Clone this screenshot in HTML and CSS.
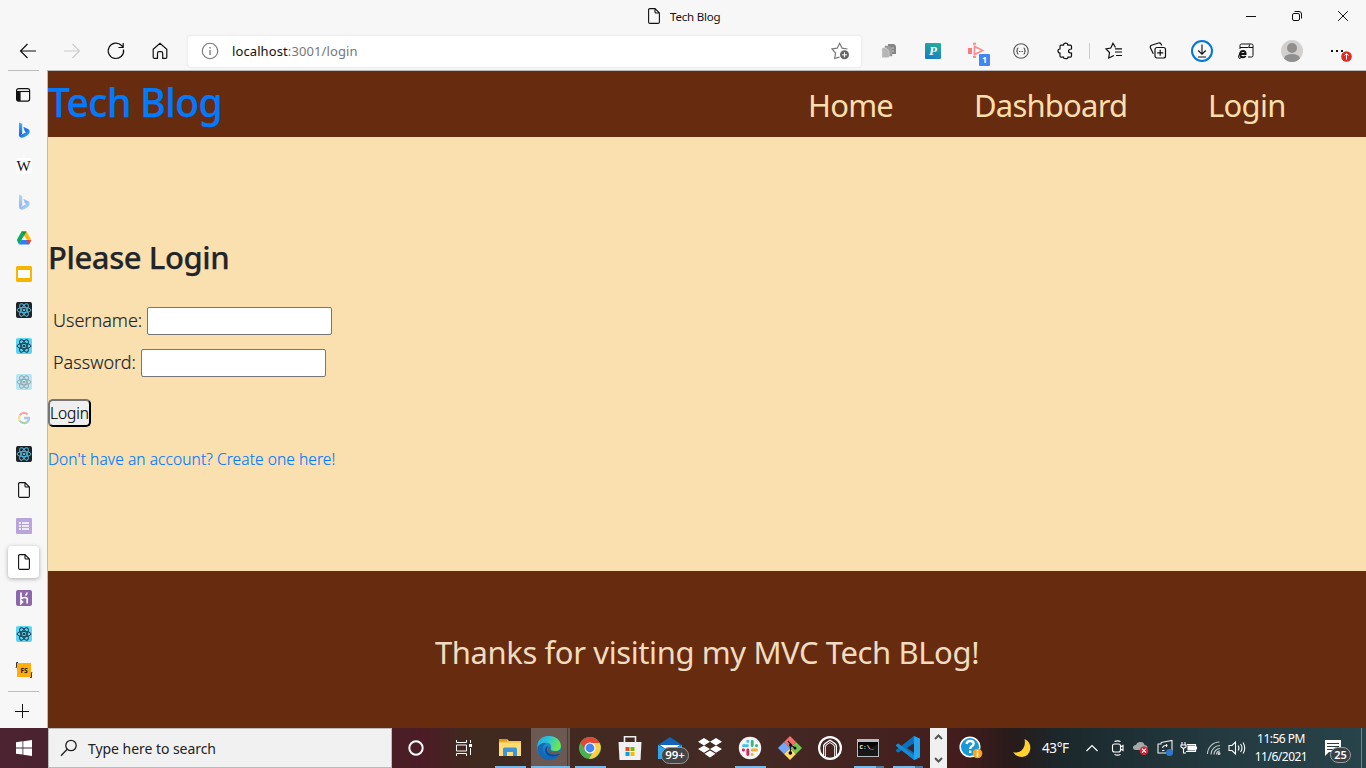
FILE: index.html
```html
<!DOCTYPE html>
<html lang="en">
<head>
<meta charset="utf-8">
<title>Tech Blog</title>
<link rel="stylesheet" href="styles.css">
</head>
<body>
<svg class="defs" width="0" height="0">
  <defs>
    <symbol id="doc" viewBox="0 0 16 16"><path d="M4 .6h5L13.400 5v9q0 1.400-1.400 1.400H4Q2.600 15.400 2.600 14V2Q2.600.6 4 .6zM9 .6V4q0 1 1 1h3.400" fill="none" stroke="#111" stroke-width="1.100"/></symbol>
    <symbol id="atom" viewBox="0 0 16 16"><g fill="none" stroke="currentColor" stroke-width="1"><ellipse cx="8" cy="8" rx="6.900" ry="2.700"/><ellipse cx="8" cy="8" rx="6.900" ry="2.700" transform="rotate(60 8 8)"/><ellipse cx="8" cy="8" rx="6.900" ry="2.700" transform="rotate(120 8 8)"/></g><circle cx="8" cy="8" r="1.300" fill="currentColor"/></symbol>
    <linearGradient id="bg1" x1="0" y1="0" x2="1" y2="1"><stop offset="0" stop-color="#38b6f8"/><stop offset=".5" stop-color="#1d6ee8"/><stop offset="1" stop-color="#30d5f5"/></linearGradient>
    <linearGradient id="bg2" x1="0" y1="0" x2="0" y2="1"><stop offset="0" stop-color="#3bbcf8"/><stop offset="1" stop-color="#2452dc"/></linearGradient>
    <symbol id="bing" viewBox="0 0 16 16"><path d="M3 .5l2.500 1q.7.300.7 1V12L3 14z" fill="url(#bg2)"/><path d="M7.500 5.500q-.5-.8.500-.5l4 2q2 1 1.700 3.200Q13.300 12.500 11 13.800l-3 1.500q-2.500 1-4-.2Q2.500 14 3 12.500q.7 1 2.500.2L10 10.200 8.500 8.800z" fill="url(#bg1)"/></symbol>
    <linearGradient id="eg1" x1="0" y1="0" x2="1" y2=".3"><stop offset="0" stop-color="#1fa8e0"/><stop offset=".5" stop-color="#2cc3d4"/><stop offset="1" stop-color="#6be850"/></linearGradient>
    <linearGradient id="eg2" x1="0" y1="0" x2="0" y2="1"><stop offset="0" stop-color="#2aa0e0"/><stop offset="1" stop-color="#0d62b8"/></linearGradient>
  </defs>
</svg>

<div class="titlebar">
  <div class="title"><svg width="16" height="16"><use href="#doc"/></svg><span>Tech Blog</span></div>
  <div class="window-buttons">
    <svg width="12" height="12"><path d="M1 6.500h10" stroke="#111"/></svg>
    <svg width="12" height="12" fill="none" stroke="#111"><rect x="1.500" y="3.500" width="7" height="7" rx="1.500"/><path d="M3.500 1.500H8q2.500 0 2.500 2.500v4.500"/></svg>
    <svg width="12" height="12"><path d="M1.200 1.200l9.600 9.600M10.800 1.200l-9.600 9.600" stroke="#111"/></svg>
  </div>
</div>

<div class="toolbar">
  <span class="tool"><svg width="18" height="18" fill="none" stroke="#111" stroke-width="1.200"><path d="M17 9H1.500M8.500 2l-7 7 7 7"/></svg></span>
  <span class="tool"><svg width="18" height="18" fill="none" stroke="#ccc" stroke-width="1.200"><path d="M1 9h15.500M9.500 2l7 7-7 7"/></svg></span>
  <span class="tool"><svg width="18" height="18" fill="none" stroke="#111" stroke-width="1.200"><path d="M16.500 7.500A7.700 7.700 0 1 1 14.500 3.500L16 5M16.200 1v4.500h-4.700"/></svg></span>
  <span class="tool"><svg width="18" height="18" fill="none" stroke="#111" stroke-width="1.200"><path d="M2.200 7.200L9 1.300l6.800 5.900v8q0 1.200-1.200 1.200h-2.900v-5q0-1.700-1.500-1.700H8q-1.500 0-1.500 1.700v5H3.400q-1.200 0-1.200-1.200z"/></svg></span>
  <div class="address">
    <svg width="18" height="18"><circle cx="9" cy="9" r="7.700" fill="none" stroke="#777" stroke-width="1.100"/><path d="M9 8v5M9 5v1.500" stroke="#777" stroke-width="1.300"/></svg>
    <span class="url">localhost<span class="path">:3001/login</span></span>
    <svg class="fav" width="20" height="18"><path d="M8.500 15.200l-4.800 1.300L4.600 11 1 7l5.200-.8L8.600 1.300l2.500 4.900 5.400.8" fill="none" stroke="#777" stroke-width="1.200"/><circle cx="13.500" cy="12.800" r="4.500" fill="#666"/><path d="M11 12.800h5M13.500 10.300v5" stroke="#fff"/></svg>
  </div>
  <span class="tool"><svg width="18" height="18"><path d="M8 2h6l2 2v8H8z" fill="#858585"/><path d="M5 4h5l2 2v8H5z" fill="#a0a0a0" stroke="#888" stroke-width=".5"/><path d="M2 6h4l3 3v6.500H2z" fill="#b5b5b5" stroke="#ddd" stroke-width=".5"/><path d="M12 6h2M12 9h2" stroke="#ccc"/></svg></span>
  <span class="tool"><span class="p-tile">P</span></span>
  <span class="tool badge-host"><svg width="20" height="18"><path d="M1 6h4v6H1z" fill="#f87d80"/><path d="M7.500 4.500v8l8-4z" fill="#fff" stroke="#f98d8f" stroke-width="1.700"/><path d="M6 1.800h3M6 15h3" fill="none" stroke="#f98d8f" stroke-width="2"/></svg><b class="one">1</b></span>
  <span class="tool"><svg width="18" height="18" fill="none" stroke="#555" stroke-width="1.100"><circle cx="9" cy="9" r="7.300"/><path d="M6.500 6q-1.300 0-1.200 1.500Q5.400 9 4.200 9q1.200 0 1.100 1.500Q5.200 12 6.500 12M11.500 6q1.300 0 1.200 1.500-.1 1.500 1.100 1.500-1.200 0-1.100 1.500.1 1.500-1.200 1.500"/><path d="M7 9.500h4" stroke-dasharray="1 .5"/></svg></span>
  <span class="tool"><svg width="18" height="18" fill="none" stroke="#111" stroke-width="1.200"><path d="M5 3.200h2.500q0-2 2.200-2t2.200 2h2.400q1.200 0 1.200 1.200V7q-3 0-3 2t3 2v3q0 1.200-1.200 1.200H12q0 1.500-2.300 1.500t-2.200-1.500H5q-1 0-1-1.200V11Q2 11 2 9t2-2V4.400q0-1.200 1-1.200z"/></svg></span>
  <i class="tool-divider"></i>
  <span class="tool"><svg width="18" height="18" fill="none" stroke="#111" stroke-width="1.200"><path d="M10.500 5.500L8 1.200 5.800 6 1 6.800l3.500 3.700-.8 5.500L9 13.500M10 6.800h7M10 10h7M11 13.500h6"/></svg></span>
  <span class="tool"><svg width="18" height="18" fill="none" stroke="#111" stroke-width="1.200"><rect x="6" y="5.500" width="10.500" height="10.500" rx="2"/><path d="M4.300 11.800L1.500 6q-.8-2 1-2.800L9.500 1q1.700-.5 2.500 1l.8 1.500M11.200 7.800v6M8.200 10.800h6"/></svg></span>
  <span class="tool"><svg width="24" height="24" fill="none"><circle cx="12" cy="12" r="10" stroke="#0078d7" stroke-width="2"/><path d="M12 5.500v9.500M8.200 11.500l3.800 3.700 3.800-3.700M8 18h8" stroke="#111" stroke-width="1.100"/></svg></span>
  <span class="tool"><svg width="18" height="18" fill="none" stroke="#111"><path d="M3 7V3.500Q3 2 4.500 2h10Q16 2 16 3.500v10q0 1.500-1.500 1.500H11M3 5.500h8q1.500 0 1.500-3M12 5.500h4"/><path d="M3.700 12h4.900q0-3-2.500-3-3 0-3 3.300 0 3 2.900 3 1.700 0 2.600-1.300" stroke-width="1.900"/><path d="M4 9.500q-3.500 5-2 6.700 1 .7 2.500-1"/></svg></span>
  <span class="tool wide"><svg width="24" height="24"><circle cx="12" cy="12" r="11" fill="#d2d0ce"/><circle cx="12" cy="9" r="5" fill="#8f8f8f"/><path d="M4 19.500q1-4.500 8-4.500t8 4.500q-3.500 3.500-8 3.500t-8-3.500z" fill="#8f8f8f"/></svg></span>
  <span class="tool wide"><svg width="32" height="24"><path d="M7 12h2M12 12h2M17 12h2" stroke="#111" stroke-width="2"/><circle cx="22.500" cy="17.500" r="5.300" fill="#d92c24"/><path d="M22.500 20.500v-6M20.500 16.500l2-2 2 2" stroke="#fff" fill="none"/></svg></span>
</div>

<div class="workspace">
  <aside class="tabs">
    <i class="line"></i>
    <div class="tab-list">
      <span class="tab"><svg width="16" height="16"><rect x=".6" y="2.600" width="13" height="12.500" rx="2" fill="none" stroke="#111" stroke-width="1.200"/><path d="M.6 5h4v10H2Q.6 15 .6 13.500z" fill="#111"/><path d="M1 5.500h13" stroke="#111" stroke-width="1.100"/></svg></span>
      <span class="tab"><svg width="16" height="16"><use href="#bing"/></svg></span>
      <span class="tab"><span class="wiki">W</span></span>
      <span class="tab faded"><svg width="16" height="16"><use href="#bing"/></svg></span>
      <span class="tab"><svg width="16" height="16"><path d="M5.500 1.500h5L5.200 11 3 14.500.8 10z" fill="#0da960"/><path d="M5.500 1.500h5l4.700 8.300h-4.800L8 5.500z" fill="#ffba00"/><path d="M5.500 1.500h5L8 5.800z" fill="#0a9150"/><path d="M5.500 10h9.700L13 14.500H3z" fill="#2d7df6"/><path d="M10.500 10h4.800L13 14.500z" fill="#ea4335"/><path d="M8 6l2.500 4h-5z" fill="#f7f7f7"/></svg></span>
      <span class="tab"><svg width="16" height="16"><rect width="16" height="16" rx="1.500" fill="#f7b500"/><rect x="2" y="4" width="12" height="8" fill="#fff"/></svg></span>
      <span class="tab"><svg class="react dark" width="16" height="16"><use href="#atom"/></svg></span>
      <span class="tab"><svg class="react" width="16" height="16"><use href="#atom"/></svg></span>
      <span class="tab faded"><svg class="react" width="16" height="16"><use href="#atom"/></svg></span>
      <span class="tab faded"><svg width="16" height="16" fill="none" stroke-width="2.300"><circle cx="8" cy="8" r="8" fill="#fff"/><path d="M11.700 4.500A5 5 0 0 0 3.700 5.500" stroke="#ea4335"/><path d="M3.700 5.500a5 5 0 0 0 0 5" stroke="#fbbc05"/><path d="M3.700 10.500a5 5 0 0 0 7.500 1.500" stroke="#34a853"/><path d="M11.200 12Q13 10.500 13 8H8" stroke="#4285f4"/></svg></span>
      <span class="tab"><svg class="react dark" width="16" height="16"><use href="#atom"/></svg></span>
      <span class="tab"><svg width="16" height="16"><use href="#doc"/></svg></span>
      <span class="tab"><svg width="16" height="16"><rect width="16" height="16" rx="1" fill="#b9a5dc"/><path d="M3 5h2M3 8h2M3 11h2M6 5h7M6 8h7M6 11h7" stroke="#fff" stroke-width="1.700"/></svg></span>
      <span class="tab active"><svg width="16" height="16"><use href="#doc"/></svg></span>
      <span class="tab"><svg width="16" height="16"><rect width="16" height="16" rx="2" fill="#8d67ac"/><path d="M5 2.500v6q5-2 6.200 0v5M11 2.500q0 1.500-1.500 3M5 10.500v3l1.500-1.500z" fill="none" stroke="#fff" stroke-width="1.700"/></svg></span>
      <span class="tab"><svg class="react" width="16" height="16"><use href="#atom"/></svg></span>
      <span class="tab"><svg width="16" height="16"><rect x="1" y="1" width="14" height="14" fill="#ffad0d"/><path d="M2 .5H.5V5L0 6M14 15.500h1.500V11l.5-1" fill="none" stroke="#333"/><text x="8" y="10.500" text-anchor="middle" class="fs">FS</text></svg></span>
    </div>
    <i class="line"></i>
    <svg class="plus" width="14" height="14"><path d="M0 7.500h14M7.500 0v14" stroke="#111"/></svg>
  </aside>

  <div class="page">
    <header class="site-header">
      <h1>Tech Blog</h1>
      <nav><a class="home">Home</a><a class="dash">Dashboard</a><a class="log">Login</a></nav>
    </header>
    <main>
      <h2>Please Login</h2>
      <div class="field"><label class="user-label">Username:</label><input type="text"></div>
      <div class="field"><label class="pass-label">Password:</label><input type="password"></div>
      <button>Login</button>
      <a class="signup">Don't have an account? Create one here!</a>
    </main>
    <footer><span>Thanks for visiting my MVC Tech BLog!</span></footer>
  </div>
</div>

<div class="taskbar">
  <span class="start"><svg width="16" height="16"><path d="M0 2.300L6.500 1.300V7.500H0zM7.300 1.200L16 0v7.500H7.300zM0 8.400h6.500v6.200L0 13.700zM7.300 8.400H16V16l-8.700-1.200z" fill="#fff"/></svg></span>
  <div class="search"><svg width="18" height="18"><circle cx="11" cy="6.500" r="5.200" fill="none" stroke="#222" stroke-width="1.300"/><path d="M7.200 10.300L1 16.800" stroke="#222" stroke-width="1.300"/></svg><span>Type here to search</span></div>
  <span class="app cortana"><svg width="18" height="18"><circle cx="9" cy="9" r="6.700" fill="none" stroke="#fff" stroke-width="2"/></svg></span>
  <span class="app view"><svg width="18" height="18" fill="none" stroke="#fff"><path d="M1.500 1v2.500h10V1M1.500 17v-2.500h10V17M1.500 6h10v6h-10zM15.500 1v3M15.500 9v7"/><path d="M14 6.500h3" stroke-width="3"/></svg></span>
  <span class="app open"><svg width="24" height="24"><path d="M1 3h8l2 2h12v15H1z" fill="#f5c84c"/><path d="M1 3h8v2.500H1z" fill="#d99a14"/><path d="M1 7h22v13H1z" fill="#ffdc74"/><path d="M5 13q0-1.500 1.500-1.500h11Q19 11.500 19 13v7h-4v-4H9v4H5z" fill="#3d94d9"/></svg></span>
  <span class="app current open"><svg width="26" height="26"><circle cx="13" cy="13" r="12" fill="url(#eg2)"/><path d="M1 12Q2 1 13 1q11 .5 12 10 0 5-6 5-5 0-4-3 1-5-5-5.500Q4 7.500 1 12z" fill="url(#eg1)"/><path d="M10 8q-6 5-1.500 11.500 5 5.500 14 .5Q18 27 10 24.500 1 21 2 12q3-4.500 8-4z" fill="#1468b5"/><path d="M12 11q-3 5 1 7.500 4 2 10 .2l1 .5q-5 3.300-11 1.800-6-3-3-9z" fill="#0c4c8e"/><path d="M14.500 12q-1.500 3 1 4.500 4 1.300 8.500-.5l-.8 2.700q-7 1.500-10-1-2-2.500-.5-5.700z" fill="#6c5952"/></svg></span>
  <span class="app open"><svg width="24" height="24"><circle cx="12" cy="12" r="11" fill="#4caf50"/><path d="M2.500 6.500Q6 1 12 1q6.500 0 9.600 6H12l-5 7z" fill="#df4936"/><path d="M21.600 7q2.500 5-.6 10-3 5.500-10 6l5-8.500L12 7z" fill="#ffcd46"/><circle cx="12" cy="12" r="5.500" fill="#fff"/><circle cx="12" cy="12" r="4.400" fill="#4285f4"/></svg></span>
  <span class="app"><svg width="24" height="26"><path d="M6.500 8V1.800h11V8" fill="none" stroke="#eee" stroke-width="1.600"/><path d="M.5 7h23l-1 18h-21z" fill="#f1f1f1"/><path d="M7.500 12h4v4h-4z" fill="#e64a1f"/><path d="M12.500 12h4v4h-4z" fill="#7db700"/><path d="M7.500 17h4v4h-4z" fill="#00a1ec"/><path d="M12.500 17h4v4h-4z" fill="#ffb700"/></svg></span>
  <span class="app mail"><svg width="24" height="24"><path d="M0 9L12 1l12 8v14H0z" fill="#1265b6"/><path d="M2 9h20l-10 7z" fill="#fff"/><path d="M0 9l12 7 12-7v14H0z" fill="#2fa7ee"/></svg><b class="pill">99+</b></span>
  <span class="app"><svg width="24" height="22" fill="#fff"><path d="M6 1l6 3.700-6 3.700L0 4.700zM18 1l6 3.700-6 3.700-6-3.700zM6 8.400l6 3.700-6 3.700-6-3.700zM18 8.400l6 3.700-6 3.700-6-3.700zM12 13.500l5.500 3.300L12 20.500l-5.500-3.700z"/></svg></span>
  <span class="app open"><svg width="24" height="24" fill="none" stroke-width="2.800" stroke-linecap="round"><circle cx="12" cy="12" r="11.200" fill="#f5f5f5"/><path d="M5.500 9.700h4M9.800 5.200v.3" stroke="#36c5f0"/><path d="M14.200 5.500v4M18.700 9.700h-.3" stroke="#2eb67d"/><path d="M14.200 14h4.300M14.200 18.500v-.2" stroke="#ecb22e"/><path d="M9.800 14v4.500M5.300 14h.3" stroke="#e01e5a"/></svg></span>
  <span class="app"><svg width="26" height="26"><path d="M13 1l6 6-6 6-6-6z" fill="#f4716c"/><path d="M19 7l6 6-6 6-6-6z" fill="#79c653"/><path d="M7 7l6 6-6 6-6-6z" fill="#77a7f8"/><path d="M13 13l6 6-6 6-6-6z" fill="#ffdb6c"/><path d="M11 6l2.500 3v9M13.500 10l4.500 3" fill="none" stroke="#222" stroke-width="1.300"/><circle cx="13.500" cy="10" r="1.500"/><circle cx="13.300" cy="18" r="1.800"/><circle cx="18" cy="13" r="1.500"/></svg></span>
  <span class="app"><svg width="26" height="26"><circle cx="13" cy="13" r="10.900" fill="none" stroke="#fff" stroke-width="2.200"/><path d="M6 20.500V11q0-2 2-3.200L13 4.500l5 3.300Q20 9 20 11v9.500l-3 2V12q0-1.500-1.300-2.300L13 8l-2.700 1.700Q9 10.500 9 12v10.500z" fill="#fff"/><path d="M7.700 21V11.500q0-1.500 1.500-2.500L13 6.500 16.800 9q1.500 1 1.500 2.500V21" fill="none" stroke="#432823" stroke-width="1"/></svg></span>
  <span class="app split cmd"><svg width="22" height="20"><path d="M0 1h22v18H0z" fill="#b7bcc0"/><path d="M1 4h20v14H1z" fill="#050505"/><path d="M1 12q11 0 20-6v12H1z" fill="#181818"/><text x="2.500" y="10.500" class="prompt">C:\_</text></svg></span>
  <span class="app split code"><svg width="26" height="26"><path d="M18 1l6 2.800v18.400L18 25 6.500 14.500l-4 3L0 16.200V15L18 1z" fill="#0b72bd"/><path d="M0 9.800l2.500-1.400L20 22l-2 3L0 11z" fill="#168bd2"/><path d="M18 1l6 2.800v18.400L18 25z" fill="#25a4ee"/><path d="M18 8v10l-7-5z" fill="#432326"/></svg></span>
  <span class="scroll"><svg width="9" height="6"><path d="M1 5l3.500-3.500L8 5" fill="none" stroke="#555" stroke-width="2"/></svg><svg width="9" height="6"><path d="M1 1l3.500 3.500L8 1" fill="none" stroke="#555" stroke-width="2"/></svg></span>
  <span class="help"><svg width="24" height="24"><circle cx="11" cy="11" r="9.800" fill="#1699d6" stroke="#fff" stroke-width="1.600"/><path d="M7.500 8q.5-3 3.700-3 3.500 0 3.500 2.700 0 1.600-2 2.600-1.500.8-1.500 2.700M11.200 14.500V17" fill="none" stroke="#fff" stroke-width="2.300"/><circle cx="18.500" cy="17.500" r="4.800" fill="#f5a623"/><path d="M18.500 16.500V21M18.500 14v1.500" stroke="#fff" stroke-width="1.500"/></svg></span>
  <span class="moon"><svg width="20" height="20"><path d="M12.500 1Q19 4 18.300 11q-1 7-8.300 8-6 0-9-5 5 1.500 8.500-1.500Q14 8 12.500 1z" fill="#ffd22e"/></svg></span>
  <span class="temp">43°F</span>
  <span class="tray chev"><svg width="14" height="10"><path d="M1.500 8L7 2.500 12.500 8" fill="none" stroke="#fff" stroke-width="1.200"/></svg></span>
  <span class="tray t2"><svg width="14" height="16" fill="none" stroke="#fff" stroke-width="1.100"><path d="M3.500 1.500q3-1.200 6 0M3.500 14.500q3 1.200 6 0"/><rect x="1.500" y="4" width="8" height="8" rx="2"/><path d="M9.500 7L12 5.500v5L9.500 9"/></svg></span>
  <span class="tray t3"><svg width="18" height="16"><path d="M4 10q-3 0-3-2.500T4 5q1-3 4.500-3t4 3q3 .3 3 2.500T13 10z" fill="#a5a9a9"/><circle cx="12" cy="10.700" r="4.300" fill="#d62433"/><path d="M10 8.700l4 4M14 8.700l-4 4" stroke="#fff" stroke-width="1.200"/></svg></span>
  <span class="tray t4"><svg width="18" height="18" fill="none" stroke="#eee" stroke-width="1.100"><path d="M5 3.500L16 1.500v11M2 5v9h10M5 3.500V5H1.500"/><path d="M6.500 9q.5-2.500 3-2.500h2M10.500 5v3M6 11.500h2.500"/><circle cx="13.500" cy="13.500" r="3.500" fill="#2b78ce" stroke="none"/></svg></span>
  <span class="tray t5"><svg width="18" height="16" fill="none" stroke="#fff" stroke-width="1.100"><path d="M2 2v3M5 2v3M1 5h5v2L3.500 8.500 1 7zM3.500 9v4H6M7 4.500h8.500v7H6M16.500 6.500v3"/><path d="M8 6h6.500v4H8z" fill="#fff"/></svg></span>
  <span class="tray t6"><svg width="16" height="16" fill="none" stroke="#c3c9ca" stroke-width="1.100"><path d="M1.500 14A12 12 0 0 1 13.500 2M5 14.500A9 9 0 0 1 14 5.500M8 14.500a6 6 0 0 1 6-6M10.500 14.500a3.500 3.500 0 0 1 3.500-3.500"/><circle cx="13" cy="13.500" r="1" fill="#fff"/></svg></span>
  <span class="tray t7"><svg width="18" height="16" fill="none" stroke="#fff" stroke-width="1.100"><path d="M1 5.500h3l3.500-3.500v12L4 10.500H1zM10 5.500q2 2.500 0 5M12.500 4q3 4 0 8M15 2.500q3.500 5.500 0 11"/></svg></span>
  <span class="clock"><span class="time">11:56 PM</span><span class="date">11/6/2021</span></span>
  <span class="notice"><svg width="18" height="18"><path d="M1 1h16v12H5l-4 4z" fill="#fff"/><path d="M3 4.500h12M3 7.500h12M3 10.500h8" stroke="#293d42"/></svg><b class="count">25</b></span>
  <i class="desktop-edge"></i>
</div>
</body>
</html>
```
FILE: styles.css
```css
* { box-sizing: border-box; }
body { margin: 0; width: 1366px; height: 768px; overflow: hidden; display: flex; flex-direction: column; background: #f7f7f7; font-family: "Noto Sans", "Open Sans", sans-serif; color: #212529; }
svg { display: block; flex: none; overflow: visible; }
.defs { position: absolute; }
span { white-space: nowrap; }
.titlebar { height: 32px; display: flex; align-items: center; padding-left: 646px; justify-content: space-between; padding-right: 17px; }
.title { display: flex; align-items: center; gap: 8px; font-size: 11.500px; letter-spacing: -.2px; color: #111; }
.window-buttons { display: flex; gap: 34px; }
.toolbar { height: 38px; display: flex; align-items: center; padding-left: 6px; }
.tool { width: 44px; height: 38px; display: flex; align-items: center; justify-content: center; flex: none; }
.tool.wide { width: 48px; }
.tool-divider { width: 1px; height: 16px; background: #ccc; margin: 0 2px; }
.address { width: 673px; height: 31px; margin: 0 6px; padding: 0 10px 0 13px; background: #fff; border-radius: 3px; box-shadow: 0 0 3px #ddd; display: flex; align-items: center; flex: none; }
.url { margin-left: 13px; font-size: 13px; letter-spacing: .1px; color: #111; }
.path { color: #777; }
.fav { margin-left: auto; }
.p-tile { width: 16px; height: 16px; border-radius: 1px; background: linear-gradient(20deg, #1b76c6, #21b494); color: #fff; font: italic bold 13px/16px "Liberation Serif", serif; text-align: center; }
.badge-host { position: relative; }
.one { position: absolute; left: 24px; top: 22px; width: 11px; height: 12px; background: #4285f4; color: #fff; border-radius: 1px; font-size: 9px; line-height: 12px; text-align: center; }
.workspace { height: 658px; display: flex; }
.tabs { width: 48px; border-right: 1px solid #bbb; display: flex; flex-direction: column; align-items: center; background: #f7f7f7; }
.line { width: 31px; height: 1px; background: #bdbdbd; flex: none; }
.tab-list { padding: 5px 0 3px; }
.tab { width: 31px; height: 36px; display: flex; align-items: center; justify-content: center; }
.tab.faded { opacity: .42; }
.tab.active { height: 32px; margin: 2px 0; border-radius: 4px; background: #fff; box-shadow: 0 1px 4px #aaa; }
.wiki { width: 16px; height: 16px; background: #fff; border-radius: 3px; color: #111; font: 15px/16px "Liberation Serif", serif; display: flex; justify-content: center; }
.react { background: #5ed3f3; border-radius: 2px; color: #173c4c; }
.react.dark { background: #202225; color: #55b9da; }
.fs { font-size: 6.500px; font-weight: 800; fill: #222; }
.plus { margin: 12px 3px 0 0; }
.page { width: 1318px; border-top: 1px solid #b9b9b9; display: flex; flex-direction: column; background: #fadfaf; }
.site-header { height: 66px; background: #672c0f; display: flex; justify-content: space-between; }
h1, h2 { margin: 0; font-weight: 500; white-space: nowrap; -webkit-text-stroke: .25px currentColor; }
h1 { color: #007bff; font-size: 39px; line-height: 52px; padding-top: 5px; letter-spacing: -.6px; }
nav { display: flex; gap: 81px; padding: 11px 80px 0 0; color: #fadfad; font-size: 31px; line-height: 46px; }
nav a { white-space: nowrap; }
.home { width: 85px; letter-spacing: -.8px; }
.dash { width: 153px; letter-spacing: -.8px; }
.log { width: 78px; letter-spacing: -.7px; }
main { height: 434px; padding-top: 97px; display: flex; flex-direction: column; align-items: flex-start; }
h2 { font-size: 31px; line-height: 46px; letter-spacing: -.42px; }
.field { height: 28px; margin: 27px 0 -13px 5px; display: flex; align-items: center; font-size: 18px; line-height: 26px; font-weight: 300; }
.field label { padding-bottom: 2px; -webkit-text-stroke: .15px currentColor; }
.user-label { width: 94px; letter-spacing: 0; }
.pass-label { width: 88px; letter-spacing: 0; }
input { width: 185px; height: 28px; border: 1px solid #767676; border-radius: 2px; background: #fff; padding: 0; margin: 0; }
button { width: 43px; height: 28px; margin-top: 35px; padding: 1px 0 0; border: 2px outset #555; border-color: #767676 #212529 #212529 #767676; border-radius: 5px; background: #efefef; font: 300 15.500px/23px "Noto Sans", sans-serif; letter-spacing: -.1px; color: #000; display: flex; justify-content: center; -webkit-text-stroke: .15px currentColor; }
.signup { margin-top: 20px; font-size: 15.500px; line-height: 24px; font-weight: 300; letter-spacing: .08px; color: #007bff; -webkit-text-stroke: .15px currentColor; }
footer { height: 157px; background: #672c0f; color: #f0dcc0; font-size: 31px; line-height: 46px; padding: 58px 0 0 387px; letter-spacing: -.4px; }
.taskbar { height: 40px; display: flex; align-items: center; color: #fff; background: linear-gradient(90deg, #4b2331 0, #4b1e26 392px, #4b1c25 425px, #40291f 470px, #432a24 720px, #44211f 900px, #431c1c 960px, #271b1b 1015px, #1b282b 1060px, #233a40 1220px, #28434a 1366px); }
.start { width: 48px; display: flex; justify-content: center; }
.search { width: 344px; height: 40px; background: #f1f1f1; border: 1px solid #bbb; display: flex; align-items: center; padding-left: 11px; gap: 10px; font-size: 14px; letter-spacing: -.05px; color: #222; flex: none; }
.app { width: 40px; height: 40px; display: flex; align-items: center; justify-content: center; position: relative; flex: none; }
.cortana { margin-left: 4px; }
.view { margin: 0 6px 0 8px; }
.open { background: linear-gradient(#76b9ed, #76b9ed) 5px 38px / 31px 2px no-repeat; }
.current { background: linear-gradient(#76b9ed, #76b9ed) 1px 38px / 39px 2px no-repeat, linear-gradient(90deg, #6c5952 36px, #4d3a34 36px, #4d3a34 37px, #67544d 37px) 1px 0 / 39px 38px no-repeat; padding-right: 2px; }
.split { background: linear-gradient(90deg, #76b9ed 22px, #527a99 22px) 4px 38px / 30px 2px no-repeat; padding-right: 4px; }
.code { background-position: 3px 38px; padding-right: 2px; }
.pill { position: absolute; left: 11px; top: 19px; width: 28px; height: 17px; border: 1px solid #9a9693; border-radius: 9px; background: #454545; font-size: 11.500px; font-weight: 600; line-height: 14px; text-align: center; }
.prompt { font: bold 6px "Liberation Mono", monospace; fill: #fff; }
.scroll { width: 17px; height: 40px; background: #f0f0f0; display: flex; flex-direction: column; align-items: center; justify-content: space-between; padding: 6px 0 5px; flex: none; }
.help { margin-left: 12px; }
.moon { margin-left: 29px; }
.temp { margin-left: 10px; width: 38px; font-size: 13.500px; letter-spacing: -.4px; }
.tray { width: 24px; height: 40px; display: flex; align-items: center; justify-content: center; flex: none; }
.chev { margin-left: 0; }
.t2 { margin-left: 2px; }
.t3 { margin-left: -1px; }
.t6 { margin-left: 1px; }
.t7 { margin-left: -1px; }
.clock { width: 62px; margin-left: 1px; display: flex; flex-direction: column; align-items: center; font-size: 12px; line-height: 18px; letter-spacing: -.5px; }
.notice { margin-left: 12px; position: relative; width: 38px; height: 40px; padding-top: 11px; }
.count { position: absolute; left: 6px; top: 19px; width: 21px; height: 16px; border: 1px solid #9aa0a1; border-radius: 8px; background: #3a4143; font-size: 11px; line-height: 14px; text-align: center; font-weight: 600; }
.desktop-edge { width: 1px; height: 40px; background: #78878b; margin-left: -1px; }
```
